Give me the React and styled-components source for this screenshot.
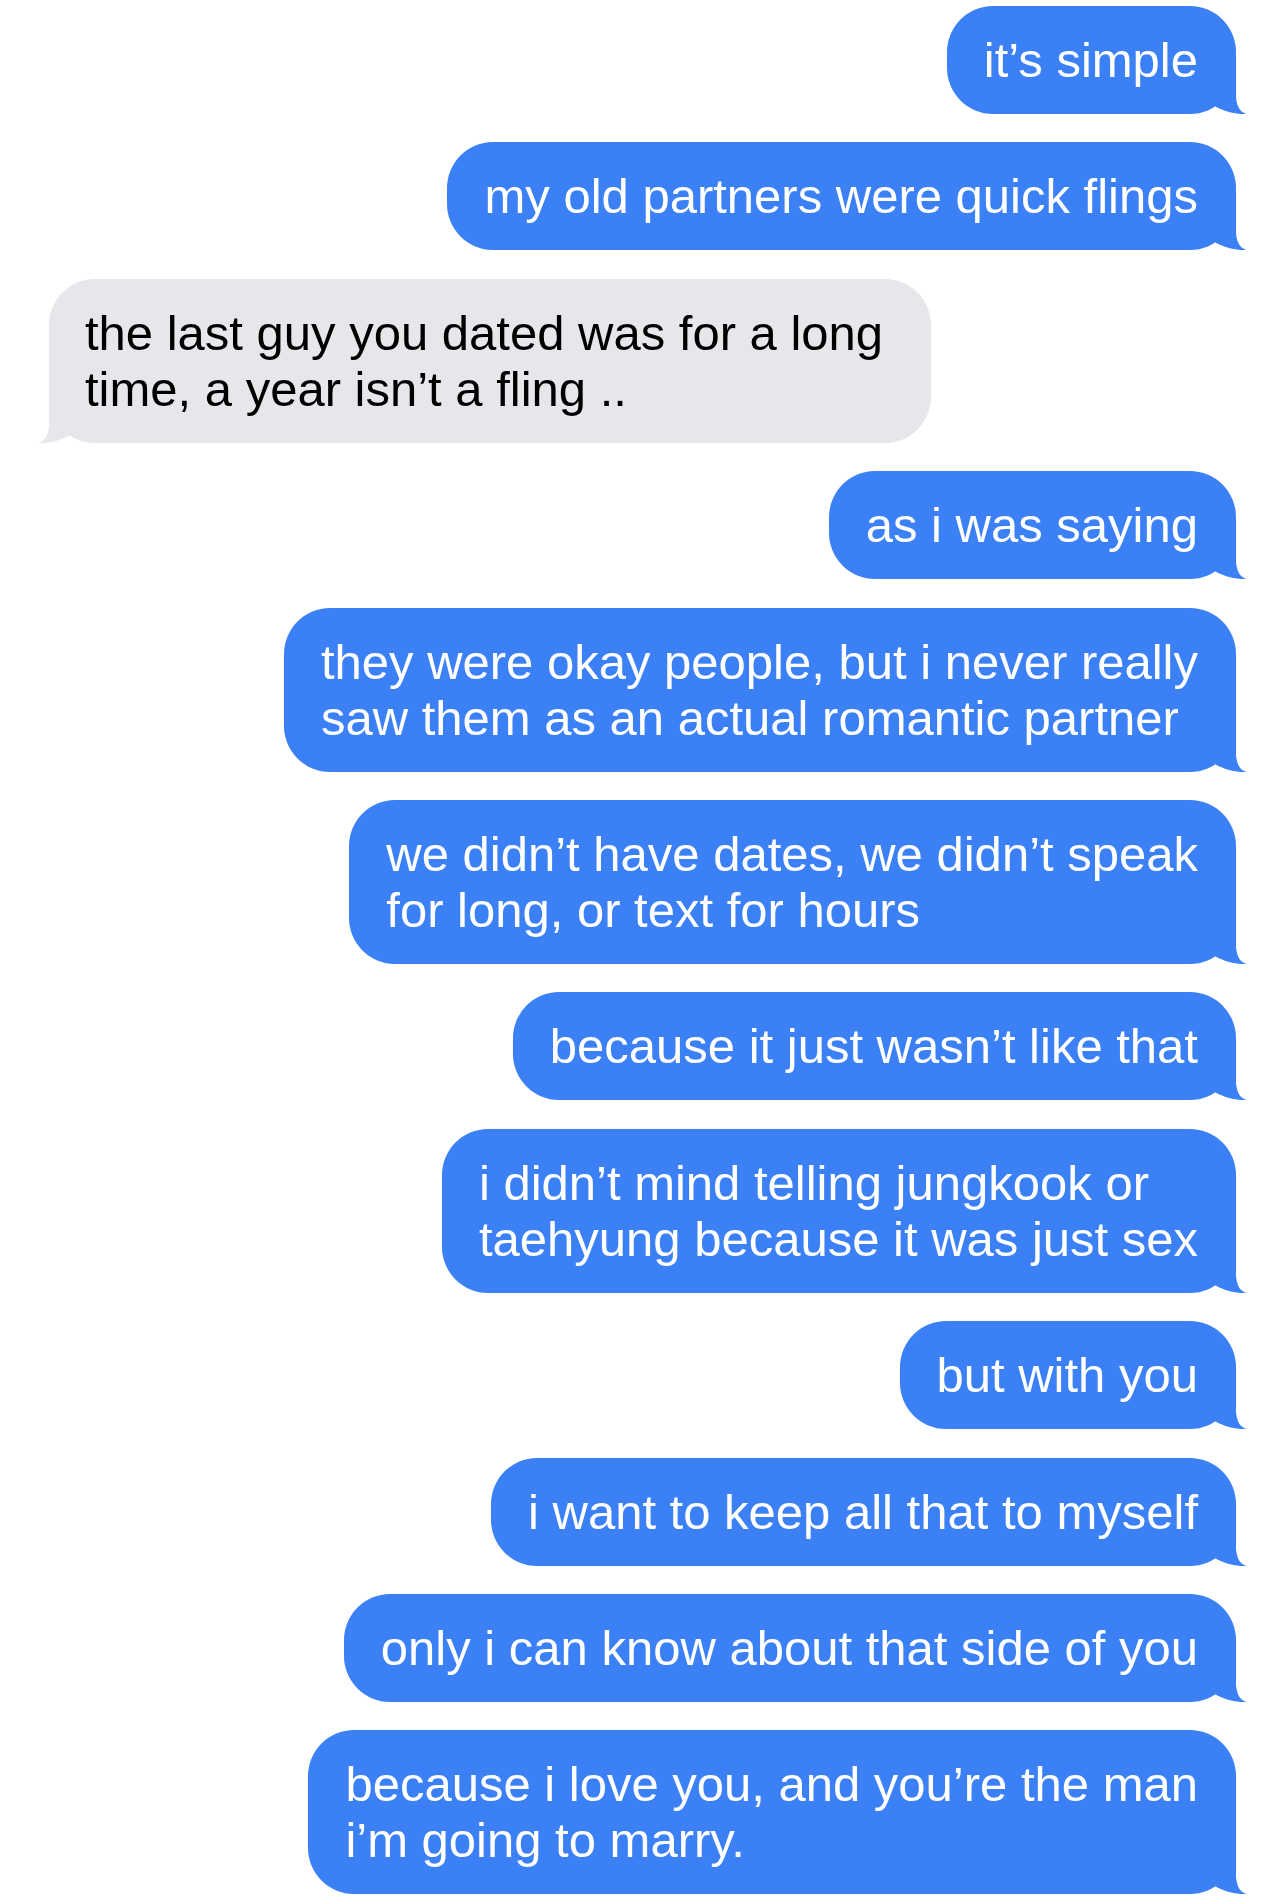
import React from "react";
import styled, { createGlobalStyle } from "styled-components";

const GlobalStyle = createGlobalStyle`
  html, body {
    margin: 0;
    padding: 0;
    background: #ffffff;
  }
  body {
    font-family: "Liberation Sans", Arial, sans-serif;
    -webkit-font-smoothing: antialiased;
  }
`;

const BLUE = "#3b80f5";
const GRAY = "#e7e6eb";

const Thread = styled.div`
  display: flex;
  flex-direction: column;
  gap: 28.4px;
  padding: 6px 48px 10px 49px;
  width: 1284px;
  box-sizing: border-box;
  min-height: 1904px;
`;

const Bubble = styled.div`
  position: relative;
  align-self: ${(p) => (p.$sent ? "flex-end" : "flex-start")};
  background: ${(p) => (p.$sent ? BLUE : GRAY)};
  color: ${(p) => (p.$sent ? "#ffffff" : "#000000")};
  border-radius: 46px;
  padding: ${(p) => (p.$sent ? "26px 38px 26px 37px" : "26px 48px 26px 36px")};
  font-size: 49px;
  line-height: 56px;
  white-space: nowrap;
`;

const Line = styled.span`
  display: block;
`;

const Tail = styled.svg`
  position: absolute;
  bottom: 0;
  width: 32px;
  height: 46px;
  ${(p) =>
    p.$sent
      ? "right: -11px;"
      : "left: -11px; transform: scaleX(-1);"}
  fill: ${(p) => (p.$sent ? BLUE : GRAY)};
`;

const messages = [
  { sent: true, lines: ["it’s simple"] },
  { sent: true, lines: ["my old partners were quick flings"] },
  {
    sent: false,
    lines: ["the last guy you dated was for a long", "time, a year isn’t a fling .."],
  },
  { sent: true, lines: ["as i was saying"] },
  {
    sent: true,
    lines: [
      "they were okay people, but i never really",
      "saw them as an actual romantic partner",
    ],
  },
  {
    sent: true,
    lines: ["we didn’t have dates, we didn’t speak", "for long, or text for hours"],
  },
  { sent: true, lines: ["because it just wasn’t like that"] },
  {
    sent: true,
    lines: ["i didn’t mind telling jungkook or", "taehyung because it was just sex"],
  },
  { sent: true, lines: ["but with you"] },
  { sent: true, lines: ["i want to keep all that to myself"] },
  { sent: true, lines: ["only i can know about that side of you"] },
  {
    sent: true,
    lines: ["because i love you, and you’re the man", "i’m going to marry."],
  },
];

function Message({ sent, lines }) {
  return (
    <Bubble $sent={sent}>
      {lines.map((l, i) => (
        <Line key={i}>{l}</Line>
      ))}
      <Tail $sent={sent} viewBox="-21 -46 32 46" aria-hidden="true">
        <path d="M -2 -46 L 0 -46 L 0 -17 C 1 -5 6 -1 11 0 C 2 1 -14 -3 -21 -8 L -21 -20 Z" />
      </Tail>
    </Bubble>
  );
}

export default function App() {
  return (
    <>
      <GlobalStyle />
      <Thread>
        {messages.map((m, i) => (
          <Message key={i} sent={m.sent} lines={m.lines} />
        ))}
      </Thread>
    </>
  );
}
